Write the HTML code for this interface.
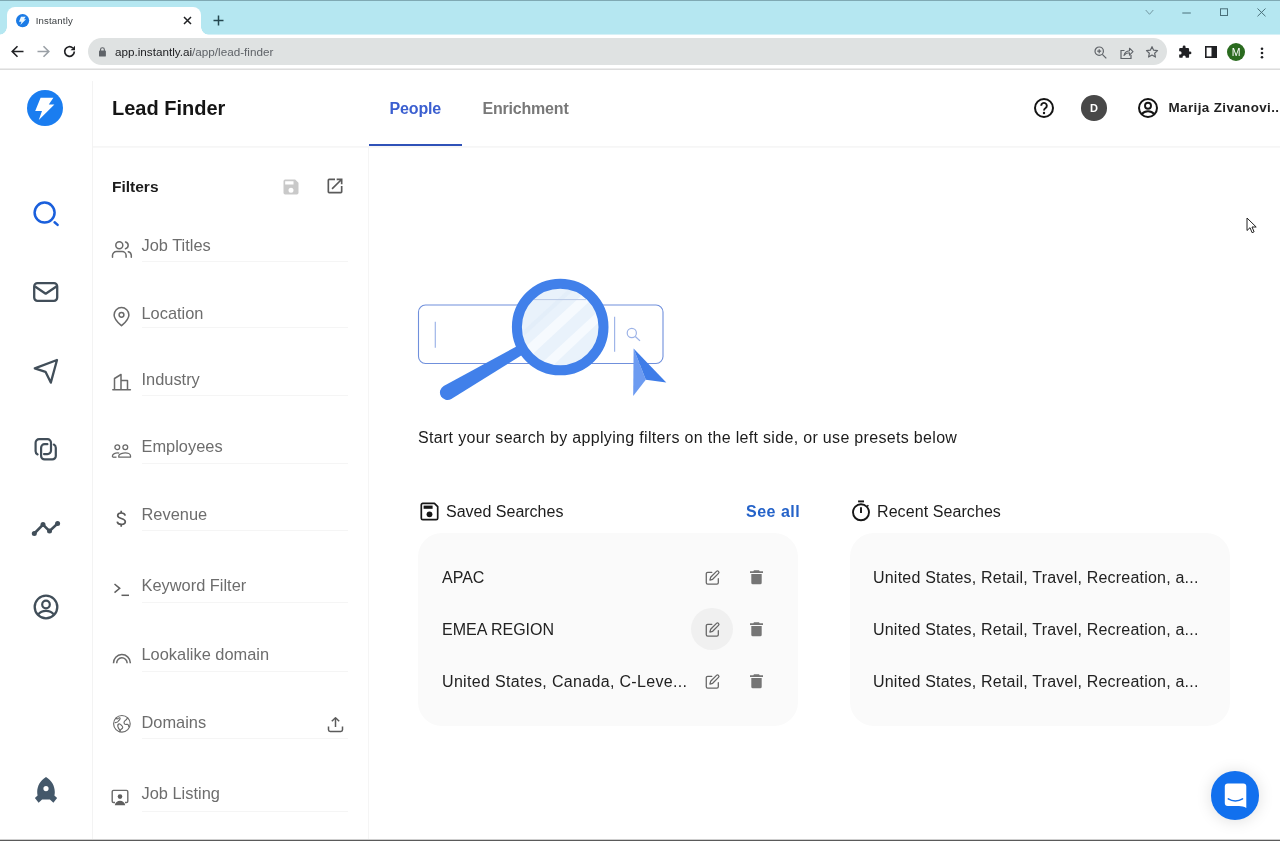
<!DOCTYPE html>
<html lang="en">
<head>
<meta charset="utf-8">
<title>Instantly</title>
<style>
*{box-sizing:border-box;margin:0;padding:0}
html,body{width:1280px;height:841px;overflow:hidden;background:#fff}
body{font-family:"Liberation Sans",Arial,sans-serif;color:#1a1a1a;position:relative}
.abs{position:absolute}
svg{display:block;overflow:visible}
.t{position:absolute;white-space:nowrap;line-height:1}
.t,.row,.fl{will-change:opacity}

/* ---------- browser chrome ---------- */
#chrome{position:absolute;left:0;top:0;width:1280px;height:70px;background:#fff}
#strip{position:absolute;left:0;top:0;width:1280px;height:35px;background:linear-gradient(#b5e7f1 0,#b5e7f1 34px,#d6f1f7 34px,#d6f1f7 35px)}
#strip:before{content:"";position:absolute;left:0;top:0;width:1280px;height:1px;background:#7fa9b3}
#tab{position:absolute;left:7px;top:7px;width:194px;height:28px;background:#fff;border-radius:8px 8px 0 0}
#tab:before,#tab:after{content:"";position:absolute;bottom:0;width:8px;height:8px}
#tab:before{left:-8px;background:radial-gradient(circle at 0 0,rgba(255,255,255,0) 7.5px,#fff 8px)}
#tab:after{right:-8px;background:radial-gradient(circle at 100% 0,rgba(255,255,255,0) 7.5px,#fff 8px)}
#omni{position:absolute;left:88px;top:38px;width:1078.500px;height:27px;border-radius:13.500px;background:#dfe2e2}
#chromeline{position:absolute;left:0;top:68px;width:1280px;height:2px;background:linear-gradient(#ececec 0,#ececec 1px,#dcdcdc 1px,#dcdcdc 2px)}

/* ---------- app ---------- */
#nav{position:absolute;left:0;top:81px;width:93px;height:760px;border-right:1px solid #f3f3f3}
#hdrline{position:absolute;left:93px;top:146px;width:1187px;height:2px;background:linear-gradient(#f6f6f6 0,#f6f6f6 1px,#f8f8f8 1px,#f8f8f8 2px)}
#filters{position:absolute;left:93px;top:147px;width:276px;height:694px;border-right:1px solid #f5f5f5}
.fl{position:absolute;left:141.500px;font-size:16.400px;color:#6d6d6d;line-height:1;white-space:nowrap}
.ful{position:absolute;left:142px;width:206px;height:1px;background:#f5f5f5}
.card{position:absolute;background:#fafafa;border-radius:24px}
.row{position:absolute;font-size:16px;color:#222;line-height:1;white-space:nowrap}
#bottomline{position:absolute;left:0;top:839px;width:1280px;height:2px;background:linear-gradient(#cfcfcf 0,#cfcfcf 35%,#5a5a5a 50%,#5a5a5a 100%)}
</style>
</head>
<body>

<!-- ================= BROWSER CHROME ================= -->
<div id="chrome">
  <div id="strip"></div>
  <div id="tab"></div>
  <!-- favicon -->
  <svg class="abs" style="left:15.900px;top:14.300px" width="13.200" height="13.200" viewBox="0 0 36 36"><circle cx="18" cy="18" r="18" fill="#1b7be6"/><path d="M13.600 7.800H26.400L21.800 14.600H27.400L11.800 29.900 15 20.900H8.200z" fill="#e8f6ff"/></svg>
  <div class="t" id="tabtitle" style="left:35.800px;top:16.300px;font-size:9.600px;letter-spacing:0.150px;color:#3c4043">Instantly</div>
  <svg class="abs" style="left:183px;top:16px" width="9" height="9" viewBox="0 0 9 9"><path d="M1 1l7 7M8 1l-7 7" stroke="#202124" stroke-width="1.5" fill="none"/></svg>
  <svg class="abs" style="left:213px;top:15px" width="11" height="11" viewBox="0 0 11 11"><path d="M5.5 0.5v10M0.5 5.5h10" stroke="#24474f" stroke-width="1.5" fill="none"/></svg>
  <!-- window controls -->
  <svg class="abs" style="left:1145px;top:9px" width="9" height="7" viewBox="0 0 9 7"><path d="M0.700 1l3.800 4.300L8.300 1" stroke="#7499a3" stroke-width="1" fill="none"/></svg>
  <svg class="abs" style="left:1182px;top:11.500px" width="9" height="2" viewBox="0 0 9 2"><path d="M0.300 1h8.500" stroke="#4a707a" stroke-width="1"/></svg>
  <svg class="abs" style="left:1220px;top:8px" width="8" height="8" viewBox="0 0 8 8"><rect x="0.500" y="0.800" width="7" height="6.700" stroke="#4a707a" stroke-width="1" fill="none"/></svg>
  <svg class="abs" style="left:1257px;top:8px" width="9" height="9" viewBox="0 0 9 9"><path d="M0.500 0.500l8 7.800M8.500 0.500l-8 7.800" stroke="#4a707a" stroke-width="1" fill="none"/></svg>
  <!-- nav buttons -->
  <svg class="abs" style="left:11px;top:45px" width="13" height="13" viewBox="0 0 13 13"><path d="M12.5 6.5H1.5M6.5 1.2 1.2 6.5l5.3 5.3" stroke="#202124" stroke-width="1.6" fill="none"/></svg>
  <svg class="abs" style="left:37px;top:45px" width="13" height="13" viewBox="0 0 13 13"><path d="M0.5 6.5h11M6.5 1.2l5.3 5.3-5.3 5.3" stroke="#9aa0a6" stroke-width="1.6" fill="none"/></svg>
  <svg class="abs" style="left:63px;top:45px" width="13" height="13" viewBox="0 0 13 13"><path d="M11.3 6.5a4.8 4.8 0 1 1-1.5-3.5" stroke="#202124" stroke-width="1.7" fill="none"/><path d="M12 0.8v4.4H7.6z" fill="#202124"/></svg>
  <div id="omni"></div>
  <!-- lock -->
  <svg class="abs" style="left:98.500px;top:46.800px" width="6.900" height="9.500" viewBox="0 0 8 11"><rect x="0" y="4" width="8" height="7" rx="1" fill="#5f6368"/><path d="M1.8 4.5V3a2.2 2.2 0 0 1 4.4 0v1.5" stroke="#5f6368" stroke-width="1.3" fill="none"/></svg>
  <div class="t" id="url" style="left:115px;top:46px;font-size:11.700px;color:#202124">app.instantly.ai<span style="color:#5f6368">/app/lead-finder</span></div>
  <!-- omnibox right icons -->
  <svg class="abs" style="left:1094px;top:46px" width="13" height="13" viewBox="0 0 13 13"><circle cx="5.2" cy="5.2" r="4.2" stroke="#5f6368" stroke-width="1.2" fill="none"/><path d="M8.3 8.3l4 4M3.2 5.2h4M5.2 3.2v4" stroke="#5f6368" stroke-width="1.2" fill="none"/></svg>
  <svg class="abs" style="left:1120px;top:45.500px" width="14" height="13" viewBox="0 0 14 13"><path d="M4.5 4.5H1v8h10V9" stroke="#5f6368" stroke-width="1.2" fill="none"/><path d="M4 9.5c.6-3 2.600-4.600 5.500-4.800V2.200L13 5.700 9.500 9.200V6.800C7.300 6.800 5.400 7.600 4 9.500z" stroke="#5f6368" stroke-width="1.1" fill="none" stroke-linejoin="round"/></svg>
  <svg class="abs" style="left:1145.300px;top:45px" width="14" height="14" viewBox="0 0 24 24"><path d="M12 2.800l2.800 6.100 6.700.7-5 4.500 1.400 6.600L12 17.300l-5.900 3.400 1.400-6.600-5-4.500 6.700-.7z" stroke="#5f6368" stroke-width="2" fill="none" stroke-linejoin="round"/></svg>
  <!-- extension puzzle -->
  <svg class="abs" style="left:1177.500px;top:45px" width="14" height="14" viewBox="0 0 24 24"><path d="M20.500 11H19V7a2 2 0 0 0-2-2h-4V3.500a2.500 2.500 0 0 0-5 0V5H4a2 2 0 0 0-2 2v3.800h1.500a2.700 2.700 0 0 1 0 5.400H2V20a2 2 0 0 0 2 2h3.800v-1.500a2.700 2.700 0 0 1 5.400 0V22H17a2 2 0 0 0 2-2v-4h1.500a2.500 2.500 0 0 0 0-5z" fill="#202124"/></svg>
  <!-- side panel -->
  <svg class="abs" style="left:1204.500px;top:45.700px" width="12" height="12" viewBox="0 0 12 12"><rect x="0.800" y="0.800" width="10.400" height="10.400" stroke="#202124" stroke-width="1.600" fill="none"/><rect x="6.500" y="0.800" width="4.700" height="10.400" fill="#202124"/></svg>
  <!-- profile -->
  <div class="abs" style="left:1227.300px;top:43px;width:18px;height:18px;border-radius:50%;background:#2a6b1f"></div>
  <div class="t" style="left:1227px;top:47px;width:18px;text-align:center;font-size:10.5px;color:#fff">M</div>
  <!-- kebab -->
  <svg class="abs" style="left:1260.300px;top:46.500px" width="4" height="12" viewBox="0 0 4 12"><circle cx="2" cy="1.800" r="1.300" fill="#202124"/><circle cx="2" cy="6" r="1.300" fill="#202124"/><circle cx="2" cy="10.200" r="1.300" fill="#202124"/></svg>
  <div id="chromeline"></div>
</div>

<!-- ================= APP ================= -->
<div id="nav"></div>
<!-- logo -->
<svg class="abs" style="left:27px;top:90px" width="36" height="36" viewBox="0 0 36 36"><circle cx="18" cy="18" r="18" fill="#1a7df0"/><path d="M13.600 7.800H26.400L21.800 14.600H27.400L11.800 29.900 15 20.900H8.200z" fill="#fff"/></svg>
<!-- nav icons -->
<svg class="abs" style="left:31px;top:199px" width="30" height="30" viewBox="0 0 30 30"><circle cx="13.600" cy="13.600" r="10" stroke="#1a5fdc" stroke-width="2.500" fill="none"/><path d="M23.600 23.300l3 2.600" stroke="#1a5fdc" stroke-width="2.500" stroke-linecap="round" fill="none"/></svg>
<svg class="abs" style="left:32px;top:281px" width="28" height="22" viewBox="0 0 28 22"><rect x="2.200" y="2.200" width="23" height="17.600" rx="3.200" stroke="#414e59" stroke-width="2.300" fill="none"/><path d="M3 5.500l10.700 7.200L24.400 5.500" stroke="#414e59" stroke-width="2.300" fill="none" stroke-linejoin="round"/></svg>
<svg class="abs" style="left:32px;top:357px" width="28" height="28" viewBox="0 0 28 28"><path d="M25 3 2.800 11.300 13.500 14.800 18.800 25.600z" stroke="#414e59" stroke-width="2.300" fill="none" stroke-linejoin="round"/></svg>
<svg class="abs" style="left:33px;top:438px" width="26" height="24" viewBox="0 0 26 24"><g stroke="#414e59" stroke-width="2.200" fill="none" stroke-linecap="round"><path d="M4.600 16.400A3.500 3.500 0 0 1 2.600 13.200V4.700A3.500 3.500 0 0 1 6.100 1.200H14.500A3.500 3.500 0 0 1 18 4.700V12.600A3.500 3.500 0 0 1 14.500 16.100H11"/><path d="M14.400 6.200H11.600A3.500 3.500 0 0 0 8.100 9.700V17.900A3.500 3.500 0 0 0 11.600 21.400H19.300A3.500 3.500 0 0 0 22.800 17.900V9.700A3.500 3.500 0 0 0 20.800 6.600"/></g></svg>
<svg class="abs" style="left:31px;top:518px" width="30" height="20" viewBox="0 0 30 20"><path d="M3.300 15.500 12 6.600l6.500 6.500L26.600 5.500" stroke="#414e59" stroke-width="2.600" fill="none" stroke-linejoin="round"/><circle cx="3.300" cy="15.500" r="2.500" fill="#414e59"/><circle cx="12" cy="6.600" r="2.500" fill="#414e59"/><circle cx="18.500" cy="13.100" r="2.500" fill="#414e59"/><circle cx="26.600" cy="5.500" r="2.500" fill="#414e59"/></svg>
<svg class="abs" style="left:33px;top:594px" width="26" height="26" viewBox="0 0 26 26"><circle cx="13" cy="13" r="11.300" stroke="#414e59" stroke-width="2.300" fill="none"/><circle cx="13" cy="10.500" r="3.800" stroke="#414e59" stroke-width="2.200" fill="none"/><path d="M5.200 20.500c2-2.600 4.700-3.700 7.800-3.700s5.800 1.100 7.800 3.700" stroke="#414e59" stroke-width="2.200" fill="none"/></svg>
<svg class="abs" style="left:33px;top:776px" width="26" height="28" viewBox="0 0 26 28"><path fill-rule="evenodd" d="M13 1C7.200 4.600 4.200 10 4.200 16c0 1.200.1 2.400.4 3.500L1.900 22l3.700 4.700 3.500-3.300h7.800l3.500 3.300L24.100 22l-2.700-2.500c.3-1.100.4-2.300.4-3.500C21.800 10 18.800 4.600 13 1zM13 10a2.600 2.600 0 1 1 0 5.200 2.600 2.600 0 0 1 0-5.200z" fill="#44586a"/></svg>
<div id="hdrline"></div>
<!-- header -->
<div class="t" id="title" style="left:112px;top:98px;font-size:20px;font-weight:700;color:#151515">Lead Finder</div>
<div class="t" id="tabPeople" style="left:389.500px;top:100.500px;font-size:16px;letter-spacing:-0.150px;font-weight:700;color:#3b5fd0">People</div>
<div class="t" id="tabEnrich" style="left:482.500px;top:100.500px;font-size:16px;letter-spacing:-0.200px;font-weight:700;color:#787878">Enrichment</div>
<div class="abs" style="left:369px;top:144px;width:93px;height:2px;background:#2f52b8"></div>
<!-- help -->
<svg class="abs" style="left:1032.400px;top:96.400px" width="24" height="24" viewBox="0 0 24 24"><circle cx="12" cy="12" r="9" stroke="#141414" stroke-width="2" fill="none"/><path d="M9.200 9.700a2.800 2.800 0 1 1 4.400 2.300c-1 .7-1.600 1.200-1.600 2.400" stroke="#141414" stroke-width="1.900" fill="none"/><circle cx="12" cy="17" r="1.200" fill="#141414"/></svg>
<div class="abs" style="left:1081.200px;top:95px;width:25.600px;height:25.600px;border-radius:50%;background:#484848"></div>
<div class="t" style="left:1081.200px;top:102.500px;width:25.600px;text-align:center;font-size:11px;font-weight:700;color:#fff">D</div>
<svg class="abs" style="left:1135.600px;top:96px" width="24" height="24" viewBox="0 0 24 24"><circle cx="12" cy="12" r="9" stroke="#141414" stroke-width="2" fill="none"/><circle cx="12" cy="9.800" r="3" stroke="#141414" stroke-width="1.900" fill="none"/><path d="M5.800 18.200c1.600-2 3.700-2.900 6.200-2.900s4.600.9 6.200 2.900" stroke="#141414" stroke-width="1.900" fill="none"/></svg>
<div class="t" id="uname" style="left:1168.500px;top:100.800px;font-size:13.400px;font-weight:700;color:#222;letter-spacing:0.400px">Marija Zivanovi...</div>
<div id="filters"></div>
<div class="t" id="ftitle" style="left:112px;top:178.500px;font-size:15.500px;font-weight:700;color:#1c1c1c">Filters</div>
<!-- save (disabled) -->
<svg class="abs" style="left:281px;top:177px" width="20" height="20" viewBox="0 0 24 24"><path d="M17 3H5a2 2 0 0 0-2 2v14a2 2 0 0 0 2 2h14a2 2 0 0 0 2-2V7l-4-4zm-5 16a3 3 0 1 1 0-6 3 3 0 0 1 0 6zm3-10H5V5h10v4z" fill="#c9c9c9"/></svg>
<!-- open in new -->
<svg class="abs" style="left:325px;top:176px" width="20" height="20" viewBox="0 0 24 24"><path d="M19 19H5V5h7V3H5a2 2 0 0 0-2 2v14a2 2 0 0 0 2 2h14a2 2 0 0 0 2-2v-7h-2v7zM14 3v2h3.590l-9.830 9.830 1.410 1.410L19 6.410V10h2V3h-7z" fill="#5a5a5a"/></svg>

<!-- filter rows -->
<svg class="abs" style="left:111px;top:239px" width="22" height="20" viewBox="0 0 22 20"><g stroke="#6a6a6a" stroke-width="1.500" fill="none" stroke-linecap="round"><circle cx="8.300" cy="6.300" r="3.500"/><path d="M1.500 18.300v-1.800a4 4 0 0 1 4-4h5.600a4 4 0 0 1 4 4v1.800"/><path d="M14.500 2.900a3.500 3.500 0 0 1 0 6.800"/><path d="M20.300 18.300v-1.800a4 4 0 0 0-3-3.800"/></g></svg>
<div class="fl" style="top:237px">Job Titles</div><div class="ful" style="top:261px"></div>

<svg class="abs" style="left:112px;top:306px" width="19" height="21" viewBox="0 0 19 21"><g stroke="#6a6a6a" stroke-width="1.500" fill="none"><path d="M9.500 1.500a7.400 7.400 0 0 1 7.400 7.400c0 4.600-4.600 8.300-7.400 10.800C6.700 17.200 2.100 13.500 2.100 8.900A7.400 7.400 0 0 1 9.500 1.500z" stroke-linejoin="round"/><circle cx="9.500" cy="8.800" r="2.400"/></g></svg>
<div class="fl" style="top:305px">Location</div><div class="ful" style="top:327px"></div>

<svg class="abs" style="left:111px;top:373px" width="21" height="18" viewBox="0 0 21 18"><g stroke="#6a6a6a" stroke-width="1.500" fill="none" stroke-linejoin="round"><path d="M3.500 16.500V5.500l6.500-4v15"/><path d="M10 7.500h6.500v9"/><path d="M1.800 16.700h17.600" stroke-linecap="round"/></g></svg>
<div class="fl" style="top:371px">Industry</div><div class="ful" style="top:395px"></div>

<svg class="abs" style="left:111px;top:443px" width="21" height="16" viewBox="0 0 21 16"><g stroke="#6a6a6a" stroke-width="1.300" fill="none"><circle cx="6.300" cy="4.200" r="2.400"/><circle cx="14.300" cy="4.200" r="2.400"/><path d="M1.500 14v-1.200c0-1.900 3.200-2.900 4.800-2.900.5 0 1.200.1 1.900.3"/><path d="M7.800 14.200v-1.400c0-1.900 4.300-2.900 6.500-2.900s5.200 1 5.200 2.900v1.400z" stroke-linejoin="round"/><path d="M1.500 14.200h4"/></g></svg>
<div class="fl" style="top:438px">Employees</div><div class="ful" style="top:463px"></div>

<svg class="abs" style="left:116px;top:510px" width="11" height="17" viewBox="0 0 11 17"><g stroke="#5a5a5a" stroke-width="1.700" fill="none"><path d="M9.200 5.600C8.800 3.900 7.300 3 5.200 3 3 3 1.700 4.100 1.700 5.600c0 1.600 1.200 2.300 3.600 2.900 2.600.7 4 1.500 4 3.300 0 1.600-1.500 2.600-3.900 2.600-2.300 0-3.900-1-4.200-2.800"/><path d="M5.200 0.700V3M5.200 14.400v2.300"/></g></svg>
<div class="fl" style="top:506px">Revenue</div><div class="ful" style="top:530px"></div>

<svg class="abs" style="left:113px;top:582px" width="18" height="16" viewBox="0 0 18 16"><g stroke="#5f5f5f" stroke-width="1.500" fill="none"><path d="M1.500 2l5.200 4.300L1.500 10.600"/><path d="M8.500 13.300h7.500"/></g></svg>
<div class="fl" style="top:577px">Keyword Filter</div><div class="ful" style="top:602px"></div>

<svg class="abs" style="left:111px;top:652px" width="22" height="12" viewBox="0 0 22 12"><g stroke="#6a6a6a" stroke-width="1.500" fill="none"><path d="M2.500 11.200a8.400 8.400 0 0 1 16.800-.5v.5"/><path d="M5.700 11.200a5.200 5.200 0 0 1 10.400-.4v.4"/></g></svg>
<div class="fl" style="top:646px">Lookalike domain</div><div class="ful" style="top:671px"></div>

<svg class="abs" style="left:112px;top:714px" width="20" height="20" viewBox="0 0 20 20"><g stroke="#6a6a6a" stroke-width="1.150" fill="none" stroke-linejoin="round" stroke-linecap="round"><circle cx="9.900" cy="9.800" r="8.300"/><path d="M4.200 4.300c.6 1 1.600.5 2.400-.2s1.600-.2 1.500.7-1.300 1.300-1.700 2.300S4.600 8.500 3.200 8.600"/><path d="M5.900 11c.4-.8 1-1.300 1.900-1s1.400 1.200 2.200 1.900 1 1.400.5 2.200-1.700 1-2.100 1.900-.3 1.200-.4 2"/><path d="M8 16.500c-.4-1-1-1.500-1.500-2.400s-1-1.900-.6-3.100"/><path d="M15.500 4.200c-.9.600-.8 1.300-1.600 1.800S12 7.500 12 8.600s.7 1.800 1.600 1.900 1.600-.4 2.300 0 .7 1.400 1 2.300"/></g></svg>
<div class="fl" style="top:714px">Domains</div><div class="ful" style="top:738px"></div>
<svg class="abs" style="left:327px;top:716px" width="17" height="17" viewBox="0 0 17 17"><g stroke="#5a5a5a" stroke-width="1.500" fill="none" stroke-linejoin="round"><path d="M8.500 11V2"/><path d="M4.800 5.300 8.500 1.700l3.700 3.600"/><path d="M1.500 10.500v3.300a1.700 1.700 0 0 0 1.700 1.700h10.600a1.700 1.700 0 0 0 1.700-1.700v-3.300"/></g></svg>

<svg class="abs" style="left:111px;top:789px" width="18" height="17" viewBox="0 0 18 17"><g fill="none" stroke="#6a6a6a" stroke-width="1.400"><path d="M4 13.500H2.500a1.300 1.300 0 0 1-1.300-1.300V2.700a1.300 1.300 0 0 1 1.300-1.300h13a1.300 1.300 0 0 1 1.300 1.300v9.500a1.300 1.300 0 0 1-1.300 1.300H14"/></g><circle cx="9" cy="7.600" r="2.300" fill="#5f5f5f"/><path d="M3.800 16.200c.5-3 2.600-4.500 5.200-4.500s4.700 1.500 5.200 4.500z" fill="#5f5f5f"/></svg>
<div class="fl" style="top:785px">Job Listing</div><div class="ful" style="top:811px"></div>

<!-- ================= MAIN ================= -->
<svg class="abs" style="left:410px;top:270px" width="270" height="140" viewBox="410 270 270 140">
  <defs>
    <clipPath id="glass"><circle cx="560.200" cy="327" r="38.500"/></clipPath>
  </defs>
  <rect x="418.500" y="305" width="244.500" height="58.500" rx="7" fill="#fff" stroke="#7090dc" stroke-width="1.100"/>
  <path d="M435.300 321.700v26" stroke="#9fb5e8" stroke-width="1.200"/>
  <path d="M614.600 316.800v35" stroke="#9fb5e8" stroke-width="1.200"/>
  <circle cx="631.800" cy="333" r="4.600" stroke="#9db3e7" stroke-width="1.200" fill="none"/>
  <path d="M635.300 336.500l4.700 4.400" stroke="#9db3e7" stroke-width="1.300"/>
  <!-- handle -->
  <path d="M520.200 344.400 443.700 386A7.500 7.500 0 0 0 451.300 399L525.200 353z" fill="#4180ea"/>
  <!-- glass -->
  <circle cx="560.200" cy="327" r="39" fill="#e9f2fb"/>
  <g clip-path="url(#glass)">
    <path d="M520 352 592 286l14 0-86 80z" fill="#f6fafe"/>
    <path d="M532 372l76-70 8 4-72 68z" fill="#f6fafe"/>
    <path d="M524 330l48-44 6 0-54 50z" fill="#dfebf8" opacity=".6"/>
  </g>
  <path d="M533 299.600h53" stroke="#b9c9e6" stroke-width="1" clip-path="url(#glass)"/>
  <circle cx="560.200" cy="327" r="43.300" stroke="#4180ea" stroke-width="10" fill="none"/>
  <!-- arrow -->
  <path d="M633.600 348.500 633.200 396 645.800 379.700z" fill="#6c9bf1"/>
  <path d="M633.600 348.500 666.300 382.400 645.800 379.700z" fill="#3f7de8"/>
</svg>
<div class="t" id="startmsg" style="left:418px;top:430px;font-size:16px;letter-spacing:0.320px;color:#1c1c1c">Start your search by applying filters on the left side, or use presets below</div>

<!-- Saved searches -->
<svg class="abs" style="left:420px;top:502px" width="19" height="19" viewBox="0 0 19 19"><path d="M2.800 1.300h11.600l3.300 3.300v11.600a1.500 1.500 0 0 1-1.500 1.500H2.800a1.500 1.500 0 0 1-1.500-1.500V2.800a1.500 1.500 0 0 1 1.500-1.500z" stroke="#161616" stroke-width="1.700" fill="none" stroke-linejoin="round"/><rect x="3.600" y="3.600" width="9" height="3.200" fill="#161616"/><circle cx="9.500" cy="12.300" r="2.900" fill="#161616"/></svg>
<div class="t" id="savedh" style="left:446px;top:504px;font-size:16px;color:#1c1c1c">Saved Searches</div>
<div class="t" id="seeall" style="left:746px;top:504px;font-size:16px;letter-spacing:0.500px;font-weight:700;color:#2563c9">See all</div>
<div class="card" style="left:418px;top:532.600px;width:380px;height:193px"></div>
<div class="row" id="r1" style="left:442px;top:570px">APAC</div>
<div class="row" id="r2" style="left:442px;top:622px">EMEA REGION</div>
<div class="row" id="r3" style="left:442px;top:674px;letter-spacing:0.330px">United States, Canada, C-Leve...</div>
<div class="abs" style="left:690.700px;top:607.500px;width:42px;height:42px;border-radius:50%;background:#f0f0f0"></div>

<svg class="abs" style="left:704.700px;top:570.200px" width="15.500" height="15.500" viewBox="0 0 17 17"><g stroke="#666" stroke-width="1.400" fill="none" stroke-linejoin="round" stroke-linecap="round"><path d="M7.500 2.500H3a1.600 1.600 0 0 0-1.600 1.600V14A1.600 1.600 0 0 0 3 15.600h10A1.600 1.600 0 0 0 14.600 14V9.500"/><path d="M12.600 1.500a1.500 1.500 0 0 1 2.200 2.200L8.400 10.200l-3 .800.800-3z"/></g></svg>
<svg class="abs" style="left:749px;top:570px" width="15" height="15" viewBox="0 0 15 15"><path d="M5 0.300h5l.7.900h3.300v1.700H1V1.200h3.300z" fill="#757575"/><path d="M2.300 4h10.400v8.800a1.500 1.500 0 0 1-1.500 1.500H3.800a1.500 1.500 0 0 1-1.500-1.500z" fill="#757575"/></svg>
<svg class="abs" style="left:704.700px;top:622.200px" width="15.500" height="15.500" viewBox="0 0 17 17"><g stroke="#666" stroke-width="1.400" fill="none" stroke-linejoin="round" stroke-linecap="round"><path d="M7.500 2.500H3a1.600 1.600 0 0 0-1.600 1.600V14A1.600 1.600 0 0 0 3 15.600h10A1.600 1.600 0 0 0 14.600 14V9.500"/><path d="M12.600 1.500a1.500 1.500 0 0 1 2.200 2.200L8.400 10.200l-3 .800.800-3z"/></g></svg>
<svg class="abs" style="left:749px;top:622px" width="15" height="15" viewBox="0 0 15 15"><path d="M5 0.300h5l.7.900h3.300v1.700H1V1.200h3.300z" fill="#757575"/><path d="M2.300 4h10.400v8.800a1.500 1.500 0 0 1-1.500 1.500H3.800a1.500 1.500 0 0 1-1.500-1.500z" fill="#757575"/></svg>
<svg class="abs" style="left:704.700px;top:674.200px" width="15.500" height="15.500" viewBox="0 0 17 17"><g stroke="#666" stroke-width="1.400" fill="none" stroke-linejoin="round" stroke-linecap="round"><path d="M7.500 2.500H3a1.600 1.600 0 0 0-1.600 1.600V14A1.600 1.600 0 0 0 3 15.600h10A1.600 1.600 0 0 0 14.600 14V9.500"/><path d="M12.600 1.500a1.500 1.500 0 0 1 2.200 2.200L8.400 10.200l-3 .800.800-3z"/></g></svg>
<svg class="abs" style="left:749px;top:674px" width="15" height="15" viewBox="0 0 15 15"><path d="M5 0.300h5l.7.900h3.300v1.700H1V1.200h3.300z" fill="#757575"/><path d="M2.300 4h10.400v8.800a1.500 1.500 0 0 1-1.500 1.500H3.800a1.500 1.500 0 0 1-1.500-1.500z" fill="#757575"/></svg>
<!-- Recent searches -->
<svg class="abs" style="left:851px;top:499.600px" width="20" height="22" viewBox="0 0 20 22"><circle cx="10" cy="12.300" r="8" stroke="#161616" stroke-width="1.900" fill="none"/><path d="M7.100 1.400h5.900" stroke="#161616" stroke-width="1.900"/><path d="M10 7.300v5.800" stroke="#161616" stroke-width="1.900"/><path d="M16.200 5.300l1.100 1.100" stroke="#161616" stroke-width="1.800"/></svg>
<div class="t" id="recenth" style="left:877px;top:504px;letter-spacing:0.080px;font-size:16px;color:#1c1c1c">Recent Searches</div>
<div class="card" style="left:850px;top:532.600px;width:380px;height:193px"></div>
<div class="row" id="q1" style="left:873px;top:570px;letter-spacing:0.210px">United States, Retail, Travel, Recreation, a...</div>
<div class="row" id="q2" style="left:873px;top:622px;letter-spacing:0.210px">United States, Retail, Travel, Recreation, a...</div>
<div class="row" id="q3" style="left:873px;top:674px;letter-spacing:0.210px">United States, Retail, Travel, Recreation, a...</div>

<!-- chat bubble -->
<div class="abs" style="left:1211.200px;top:771.400px;width:48.200px;height:48.200px;border-radius:50%;background:#1170ee;box-shadow:0 1px 16px rgba(0,0,0,.13)"></div>
<svg class="abs" style="left:1224px;top:783px" width="23" height="26" viewBox="0 0 23 26"><path d="M3.800 0.500h15.500a3 3 0 0 1 3 3V24.900c-2.300-1.200-4.800-1.900-7.300-1.900H3.800a3 3 0 0 1-3-3V3.500a3 3 0 0 1 3-3z" fill="#fff"/><path d="M4.300 15.900c4 2.700 10 2.700 14.200 0" stroke="#1170ee" stroke-width="1.600" fill="none" stroke-linecap="round"/></svg>

<!-- mouse cursor -->
<svg class="abs" style="left:1246.400px;top:217.300px" width="12" height="18" viewBox="0 0 12 18"><path d="M1 1v12.500l3-2.800 2.100 5 2-.9-2.100-4.800h4.200z" fill="#fff" stroke="#222" stroke-width="1" stroke-linejoin="round"/></svg>

<div id="bottomline"></div>
</body>
</html>
